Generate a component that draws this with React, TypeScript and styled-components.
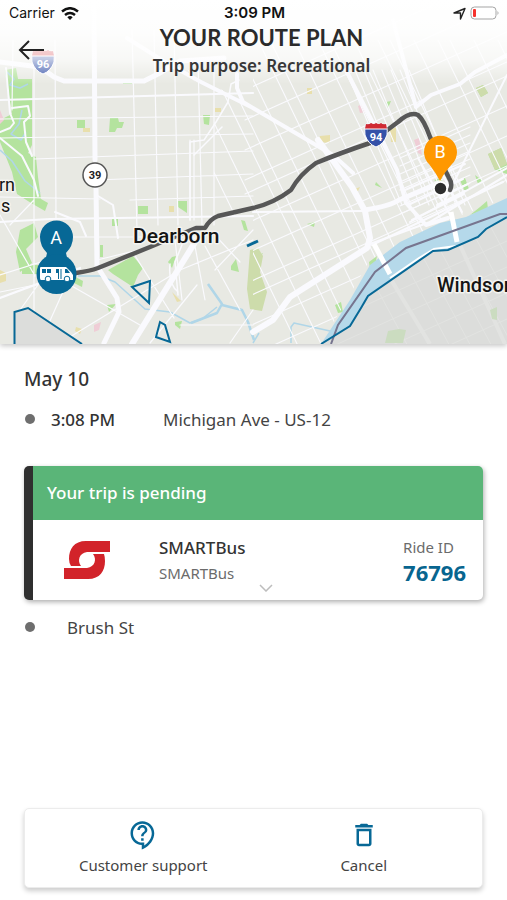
import React from "react";
import styled, { createGlobalStyle } from "styled-components";
import { MdDeleteOutline, MdOutlineContactSupport } from "react-icons/md";

const GlobalStyle = createGlobalStyle`
  *, *::before, *::after { box-sizing: border-box; }
  body {
    margin: 0;
    background: #fff;
    color: #333;
    font-family: "Noto Sans", "Open Sans", sans-serif;
  }
  button { font: inherit; color: inherit; background: none; border: 0; padding: 0; cursor: pointer; }
  h1, h2, p { margin: 0; }
`;

const Page = styled.main`
  display: flex;
  flex-direction: column;
  min-height: 100vh;
`;

const Hero = styled.section`
  display: grid;
  box-shadow: 0 2px 5px rgba(0, 0, 0, 0.22);
  > * { grid-area: 1 / 1; }
`;

const MapSvg = styled.svg`
  display: block;
  width: 100%;
  height: 344px;
  background: #e8e9e3;
`;

const HeroTop = styled.div`
  z-index: 1;
  align-self: start;
  height: 84px;
  background: linear-gradient(#fff 0%, rgba(255, 255, 255, 0.93) 38%, rgba(255, 255, 255, 0.7) 70%, rgba(255, 255, 255, 0) 100%);
`;

const StatusBar = styled.div`
  display: grid;
  grid-template-columns: 1fr auto 1fr;
  align-items: center;
  height: 26px;
  padding: 0 7px 0 9px;
  color: #111;
  font: 400 14px/26px Inter, sans-serif;
`;

const StatusGroup = styled.div<{ $end?: boolean }>`
  display: flex;
  align-items: center;
  gap: ${(p) => (p.$end ? 4 : 6)}px;
  justify-content: ${(p) => (p.$end ? "flex-end" : "flex-start")};
`;

const Clock = styled.time`
  font-size: 15px;
  font-weight: 600;
`;

const TitleBar = styled.header`
  display: grid;
  grid-template-columns: 48px 1fr 32px;
  align-items: start;
`;

const BackButton = styled.button`
  display: flex;
  height: 48px;
  padding-left: 16px;
  align-items: center;
`;

const Titles = styled.div`
  text-align: center;
`;

const Title = styled.h1`
  color: #2b2b2b;
  font: 700 22px/24px Lato, sans-serif;
`;

const Purpose = styled.p`
  color: #383838;
  font-size: 17px;
  line-height: 32px;
  font-weight: 600;
`;

const Itinerary = styled.section`
  display: flex;
  flex-direction: column;
  padding: 20px 24px;
`;

const DateHeading = styled.h2`
  font-size: 19px;
  line-height: 30px;
  font-weight: 500;
`;

const Stop = styled.div<{ $gap: number }>`
  display: flex;
  align-items: center;
  gap: ${(p) => p.$gap}px;
  height: 50px;
  padding: 0 1px;
  font-size: 17px;
  color: #444;
`;

const Dot = styled.span`
  width: 10px;
  height: 10px;
  border-radius: 50%;
  background: #6e6e6e;
`;

const StopTime = styled.time`
  width: 96px;
  color: #333;
  font-weight: 500;
`;

const TripCard = styled.article`
  margin: 22px 0 2px;
  border-left: 9px solid #2f2f2f;
  border-radius: 5px;
  overflow: hidden;
  background: #fff;
  box-shadow: 1px 2px 5px rgba(0, 0, 0, 0.32);
`;

const TripStatus = styled.p`
  padding: 0 14px;
  background: #5ab578;
  color: #fff;
  font-size: 17px;
  line-height: 54px;
  font-weight: 500;
`;

const TripBody = styled.div`
  display: grid;
  grid-template-columns: 126px 1fr auto;
  grid-template-rows: 48px 9px;
  padding: 15px 17px 8px 0;
`;

const LogoCell = styled.div`
  padding: 6px 0 0 31px;
`;

const Provider = styled.div`
  display: flex;
  flex-direction: column;
`;

const ProviderName = styled.span`
  color: #333;
  font-size: 17px;
  line-height: 26px;
  font-weight: 500;
`;

const Muted = styled.span`
  color: #6b6b6b;
  font-size: 15px;
  line-height: 24px;
`;

const RideId = styled.strong`
  color: #07658f;
  font-size: 22px;
  line-height: 26px;
  font-weight: 700;
`;

const ExpandButton = styled.button`
  grid-column: 1 / -1;
  justify-self: center;
  align-self: end;
  display: flex;
  padding-left: 32px;
`;

const Actions = styled.nav`
  display: grid;
  grid-template-columns: 1fr 1fr;
  margin: auto 24px 12px;
  padding: 0 8px;
  border: 1px solid #ececec;
  border-radius: 5px;
  background: #fff;
  box-shadow: 0 3px 5px rgba(0, 0, 0, 0.2);
`;

const Action = styled.button`
  display: flex;
  flex-direction: column;
  align-items: center;
  height: 78px;
  padding-top: 11px;
  color: #444;
  font-size: 15px;
  line-height: 30px;
  svg { color: #076896; }
`;

type Line = [number, number, number, number];

const westStreets: Line[] = [
  [34, 60, 34, 343], [55, 40, 56, 220], [132, 30, 137, 230], [154, 30, 158, 225],
  [174, 30, 178, 225], [198, 60, 202, 225], [214, 60, 214, 225],
  [190, 140, 190, 220], [194, 140, 194, 220], [13, 40, 12, 110],
  [0, 119, 253, 116], [0, 138, 253, 134], [34, 159, 253, 151], [0, 197, 100, 199],
  [96, 180, 253, 174], [70, 237, 200, 237], [130, 200, 253, 196],
  [0, 275, 60, 256], [0, 292, 60, 280], [20, 310, 70, 240], [70, 285, 140, 325],
  [40, 343, 66, 285], [60, 343, 180, 270], [134, 254, 174, 318], [97, 260, 180, 240],
  [180, 270, 253, 240], [192, 230, 205, 300], [205, 246, 240, 310], [212, 232, 240, 262],
  [215, 270, 253, 230], [180, 325, 253, 325], [150, 343, 197, 285], [230, 343, 253, 310],
  [0, 215, 35, 276], [10, 225, 34, 200], [175, 240, 182, 300],
];

const mainStreets: Line[] = [
  [0, 100, 253, 93], [0, 222, 50, 219], [50, 219, 253, 216], [253, 212, 365, 211],
  [0, 298, 80, 268], [370, 244, 430, 222], [430, 222, 507, 175],
];

const range = (count: number) => Array.from({ length: count }, (_, i) => i);

const eastCross: Line[] = range(18).map((i) => {
  const x = 150 + i * 20 + (i % 3) * 4;
  return [x, 40, x + 150, 350];
});
const eastAlong: Line[] = range(14).map((i) => {
  const y = 90 + i * 26 + (i % 4) * 4;
  return [245, y, 507, y - 118];
});
const downtownCross: Line[] = range(8).map((i) => [346 + i * 9, 70, 402 + i * 9, 205]);
const downtownAlong: Line[] = range(8).map((i) => [400, 158 + i * 8, 470, 127 + i * 8]);

const toPath = (lines: Line[]) => lines.map(([a, b, c, d]) => `M${a} ${b}L${c} ${d}`).join("");

const parks = [
  "M5 70l11-2 2 11h14v66l-4 8 8 4 2 20 3 22 7 4-3 8-14-8-14-9-5-22L0 142v-22l12-6z",
  "M77 120h8v8h-8zM110 118h8l1 4h5l-2 6h-5l-2 4h-6zM123 82h9v2h-9zM203 115h7l-1 10-5-1z",
  "M138 206h10v8h-10zM177 201h10v12l-9-6zM112 219h6v7h-6zM100 245h3v12h-3z",
  "M20 230l14-7 4 14-12 12 6 14-12 9-4-20zM22 265h30v9H22z",
  "M108 270l25-14 10 12-5 7-5 12-20-13zM68 273l15 8-1 6-14-7zM231 266l5-7 3 13-8-2zM107 305l9-1-7 8z",
  "M175 322l7-1-2 8-5-4zM241 220l4 1 3 10-4-1zM168 262l4-5 4-1-4 12z",
  "M476 88l7-3 5 8-7 4zM488 154l13-6 6 16v10l-12-4zM376 182l6 6-7-3zM460 180l5-2 4 11-4 3zM475 175l8 6-5 3z",
  "M253 258l10-5-7 12-3 2zM335 305l6-3 2 10-5 1zM369 262l8-6-3 14-4-1zM480 207l7-6 1 8-18 6z",
  "M388 331l11-2 7 1-3 13h-18zM490 310l7-2v12l-5-2zM307 224l8-2-1 5zM434 180l8-2-1 6zM386 102l5-1-3 7z",
];

const olives = [
  "M250 250l8-2 5 8-3 16 7 20-5 19-12-2-3-20z",
  "M476 88l7-3 5 8-7 4zM488 154l13-6 6 16-12 6z",
];

const sands = [
  "M83 128h7v4h-7zM215 108h6v4h-6zM0 270l6 3v8l-6 2zM76 327l6 2-2 5-5-3zM169 206h5v6h-5z",
  "M320 136l10-1v8l-12-1zM390 130l6-3v15h-5zM307 88h5v6h-5zM172 292l9 9-4 1zM352 190l8-3-2 4z",
];

const pinks = "M358 106l5-2 3 8-6 1zM414 140l5-2 3 17-4-2zM94 325l7-3-2 8-5 2zM0 110l4 10-4 4z";

const land = "M0 0H507V198L466 217L440 223L400 242L370 265L350 300L321 344H0Z";
const windsor = "M321 344L350 326L361 308L368 296L433 251L448 250L478 237L486 229L507 217V344Z";

function InterstateShield({ x, y, label }: { x: number; y: number; label: string }) {
  return (
    <g transform={`translate(${x} ${y})`}>
      <path d="M-10-11q3 1 5-1 3 2 5 0 3 2 5 0 2 2 5 1 2 6 1 11-3 9-11 12-8-3-11-12-1-5 1-11z" fill="#3451a8" stroke="#fff" />
      <path d="M-10-11q3 1 5-1 3 2 5 0 3 2 5 0 2 2 5 1l1 5h-22z" fill="#d02a33" />
      <path d="M-11-6h22" stroke="#fff" strokeWidth="1" />
      <text y="6" textAnchor="middle" fill="#fff" fontFamily="Roboto, sans-serif" fontWeight="700" fontSize="11">{label}</text>
    </g>
  );
}

function RouteMap() {
  return (
    <MapSvg viewBox="0 0 507 344" preserveAspectRatio="xMidYMid slice" role="img" aria-label="Route map">
      <defs>
        <clipPath id="land"><path d={land} /></clipPath>
        <clipPath id="east"><path d="M175 62L253 108L340 160L363 210L370 244L290 297L253 332V215L214 218V100ZM253 0H507V198L440 223L370 260L321 344H253Z" /></clipPath>
        <clipPath id="windsor"><path d={windsor} /></clipPath>
      </defs>
      {parks.map((d) => <path key={d} d={d} fill="#b4e39e" />)}
      {olives.map((d) => <path key={d} d={d} fill="#cddcab" />)}
      {sands.map((d) => <path key={d} d={d} fill="#e8dfac" />)}
      <path d={pinks} fill="#efcdd6" />
      <g fill="none" stroke="#b0d6e8" strokeWidth="1.5" strokeLinejoin="round">
        <path d="M7 72l7 7-4 6 10 3 8-4M22 110l-3 14-8 10 10 6 5-8M0 150l12 11 13 20 15 12" />
        <path d="M78 276l22 0 15 6 30 27 25 3 20 11 12-4 15-12M253 343l6-10M291 343v-16l3-4 36 8" />
        <path d="M208 284l14 20-5 9-26 10M222 305l20 5 6 12 6 18" strokeWidth="2.5" />
      </g>

      <g fill="none" stroke="#fafafe" strokeLinecap="round" strokeLinejoin="round">
        <path d={toPath(westStreets)} strokeWidth="1.2" />
        <g clipPath="url(#east)">
          <path d={toPath(eastCross)} strokeWidth="1.1" />
          <path d={toPath(eastAlong)} strokeWidth="1.1" />
          <path d={toPath(downtownCross)} strokeWidth="1.1" />
        </g>
        <g clipPath="url(#land)">
          <path d={toPath(downtownAlong)} strokeWidth="1.2" />
          <path d="M418 158l35 62M430 150l32 62M405 190l60-26M408 205l55-26M412 220l52-26M440 198l28-14M437 205l28-14" strokeWidth="2" />
          <path d="M507 75L445 200M507 168L410 222M503 182L372 245" strokeWidth="2" />
        </g>
        <path d={toPath(mainStreets)} strokeWidth="2.2" />
        <path d="M6 68l4 45 4 10-4 5-10 4M12 108l16-2 2 10-6 6 2 20 6 14M0 138l22 18 12 24 4 16M98 196l15 9 5 33M55 212l25 10 6 14" strokeWidth="2" />
        <path d="M190 220V142l14-2 12-18 12-20 3-18 8-4M194 155l28-28M170 264q-2 20 8 28M184 240l-9 22 3 33" strokeWidth="1.5" />
        <path d="M94 0l1 160M96 186l1 80 20 32 2 14-15 31" strokeWidth="5" />
        <path d="M0 62l40 5 14 10 10 4h80l14-7 22-13 44-3" strokeWidth="5" />
        <path d="M127 38l38 24 36 20 52 26 80 47 20 18M237 74l0 14 6 14 15 9" strokeWidth="4" />
        <path d="M197 239l-65 105" strokeWidth="6" />
        <path d="M318 140l16 22 18 25 13 24 5 27-3 10-77 49-17 23-20 12" strokeWidth="6" />
        <path d="M365 210q25-4 34-10l34-14" strokeWidth="5" />
        <path d="M346 70l24 47 27 53 9 33 20 22 22-7" strokeWidth="4" />
        <path d="M393 20l23 87M507 55l-32 17-15 12-29 11-15 12" strokeWidth="4" />
      </g>

      <path d="M321 344L350 300L370 265L400 242L440 223L466 217L507 198V217L486 229L478 237L448 250L433 251L368 296L361 308L350 326Z" fill="#b5d9ea" />
      <path d={windsor} fill="#dcdddb" />
      <g clipPath="url(#windsor)" fill="none" stroke="#e2e3e1">
        <path d={toPath(range(10).map((i): Line => [340 + i * 21, 220, 410 + i * 21, 350]))} />
        <path d={toPath(range(7).map((i): Line => [320, 300 + i * 26, 507, 215 + i * 26]))} />
        <path d="M390 278l40 66M460 245l45 99" strokeWidth="4" />
        <path d="M388 331l11-2 7 1-3 13h-18zM490 310l7-3v13l-5-1z" fill="#cbdcc0" stroke="none" />
      </g>
      <path d="M374 244l16 30M451 212l6 30" stroke="#fff" strokeWidth="5" />
      <path d="M390 278l29-20 15-9 22-3" fill="none" stroke="#fff" strokeWidth="2" />
      <path d="M331 344L338 325L375 272L406 248L500 214H507" fill="none" stroke="#77758f" strokeWidth="2" />
      <path d="M321 344L350 326L361 308L368 296L433 251L448 250L478 237L486 229L507 217" fill="none" stroke="#076896" strokeWidth="2" />

      <g stroke="#076896" strokeWidth="2">
        <path d="M14.500 346V312L28 308L82 344" fill="#dcdddb" />
        <path d="M132 287l18-6-1 22zM160 322l5 3 5 17-14-5z" fill="none" />
        <path d="M247 246l11-5" strokeWidth="3" />
      </g>

      <path d="M76 273Q90 271 98 268L150 247L196 228L205 228Q210 219 218 216L253 208Q274 203 291 190Q300 174 316 163Q340 153 370 143L398 122Q410 111 418 115Q424 120 430 137L440 160L449 178Q453 184 450 190" fill="none" stroke="#575757" strokeWidth="4.500" strokeLinecap="round" strokeLinejoin="round" />

      <InterstateShield x={43} y={62} label="96" />
      <InterstateShield x={376} y={135} label="94" />
      <circle cx="95" cy="175" r="12" fill="#fff" stroke="#555" strokeWidth="1.500" />
      <text x="95" y="179" textAnchor="middle" fontFamily="Roboto, sans-serif" fontWeight="700" fontSize="11" fill="#222">39</text>

      <g fontFamily="Roboto, sans-serif" fontWeight="500" fill="#151515" stroke="#f4f4f0" strokeWidth="3" strokeLinejoin="round" paintOrder="stroke">
        <text x="133" y="243" fontSize="21">Dearborn</text>
        <text x="437" y="292" fontSize="20">Windsor</text>
        <text x="-1" y="191" fontSize="18" fontWeight="400">rn</text>
        <text x="1" y="212" fontSize="18" fontWeight="400">s</text>
      </g>

      <path d="M440 181Q436 173 429 164A16.500 16.500 0 1 1 452 164Q444 173 440 181Z" fill="#ff9800" />
      <circle cx="440.500" cy="188.500" r="7.500" fill="#fff" />
      <circle cx="440.500" cy="188.500" r="5.700" fill="#2c2c2c" />
      <path d="M47 253Q40 246 40 237A16.500 16.500 0 0 1 73 237Q73 246 66 253L68 262H45Z" fill="#076896" />
      <circle cx="56.500" cy="274" r="20" fill="#076896" />
      <g fontFamily="Roboto, sans-serif" fontSize="18" fill="#fff" textAnchor="middle">
        <text x="56" y="244">A</text>
        <text x="440" y="158">B</text>
      </g>
      <g transform="translate(40 266)">
        <path d="M1 1H26L31 6L33 9V14H1Q0 14 0 12V2Q0 1 1 1Z" fill="#fff" />
        <path d="M2 3h4v4H2zM7 3h4v4H7zM16 3h3v4h-3zM18 3h1v10H18zM20.500 3h1v10h-1zM25 3h2l3 4h-5z" fill="#076896" />
        <g fill="#fff" stroke="#076896" strokeWidth="1"><circle cx="8" cy="13" r="2.800" /><circle cx="27" cy="13" r="2.800" /></g>
      </g>
    </MapSvg>
  );
}

const WifiIcon = () => (
  <svg width="18" height="13" viewBox="0 0 18 13" fill="none" stroke="#111" strokeWidth="2.500" aria-hidden="true">
    <path d="M1 4.500Q9-2 17 4.500M4 8q5-4 10 0" />
    <path d="M6.300 10.200Q9 8 11.700 10.200L9 13z" fill="#111" stroke="none" />
  </svg>
);

const LocationIcon = () => (
  <svg width="13" height="13" viewBox="0 0 13 13" fill="none" stroke="#222" strokeWidth="1.400" strokeLinejoin="round" aria-hidden="true">
    <path d="M1 6L12 1.500L7.500 12V6Z" />
  </svg>
);

const BatteryIcon = () => (
  <svg width="30" height="14" viewBox="0 0 30 14" aria-hidden="true">
    <rect x="1" y="1" width="25" height="12" rx="3.500" fill="#fff" stroke="#a5a5a5" />
    <rect x="3" y="3" width="3" height="8" rx="1" fill="#f5322d" />
    <path d="M27.500 5q2 2 0 4z" fill="#a5a5a5" />
  </svg>
);

const BackIcon = () => (
  <svg width="30" height="22" viewBox="0 0 30 22" fill="none" stroke="#222" strokeWidth="2" aria-hidden="true">
    <path d="M28 11H4M13 2L4 11L13 20" />
  </svg>
);

const SmartLogo = () => (
  <svg width="46" height="38" viewBox="0 0 46 38" fill="#d2232a" role="img" aria-label="SMART">
    <path id="arm" d="M46 0H22C10 0 5 8 5 18Q5 22 7 25H17C13 20 15 12 23 11H46Z" />
    <path d="M0 38H24C36 38 41 30 41 20Q41 16 40 13H29C33 18 31 26 23 27H0Z" />
  </svg>
);

export default function App() {
  return (
    <Page>
      <GlobalStyle />
      <Hero>
        <RouteMap />
        <HeroTop>
          <StatusBar>
            <StatusGroup><span>Carrier</span><WifiIcon /></StatusGroup>
            <Clock>3:09 PM</Clock>
            <StatusGroup $end><LocationIcon /><BatteryIcon /></StatusGroup>
          </StatusBar>
          <TitleBar>
            <BackButton aria-label="Back"><BackIcon /></BackButton>
            <Titles>
              <Title>YOUR ROUTE PLAN</Title>
              <Purpose>Trip purpose: Recreational</Purpose>
            </Titles>
          </TitleBar>
        </HeroTop>
      </Hero>

      <Itinerary>
        <DateHeading>May 10</DateHeading>
        <Stop $gap={16}>
          <Dot />
          <StopTime>3:08 PM</StopTime>
          <span>Michigan Ave - US-12</span>
        </Stop>
        <TripCard>
          <TripStatus>Your trip is pending</TripStatus>
          <TripBody>
            <LogoCell><SmartLogo /></LogoCell>
            <Provider>
              <ProviderName>SMARTBus</ProviderName>
              <Muted>SMARTBus</Muted>
            </Provider>
            <Provider>
              <Muted>Ride ID</Muted>
              <RideId>76796</RideId>
            </Provider>
            <ExpandButton aria-label="Show trip details">
              <svg width="14" height="8" viewBox="0 0 14 8" fill="none" stroke="#bdbdbd" strokeWidth="1.500" aria-hidden="true">
                <path d="M1 1L7 7L13 1" />
              </svg>
            </ExpandButton>
          </TripBody>
        </TripCard>
        <Stop $gap={32}>
          <Dot />
          <span>Brush St</span>
        </Stop>
      </Itinerary>

      <Actions aria-label="Trip actions">
        <Action><MdOutlineContactSupport size={30} aria-hidden="true" />Customer support</Action>
        <Action><MdDeleteOutline size={30} aria-hidden="true" />Cancel</Action>
      </Actions>
    </Page>
  );
}
